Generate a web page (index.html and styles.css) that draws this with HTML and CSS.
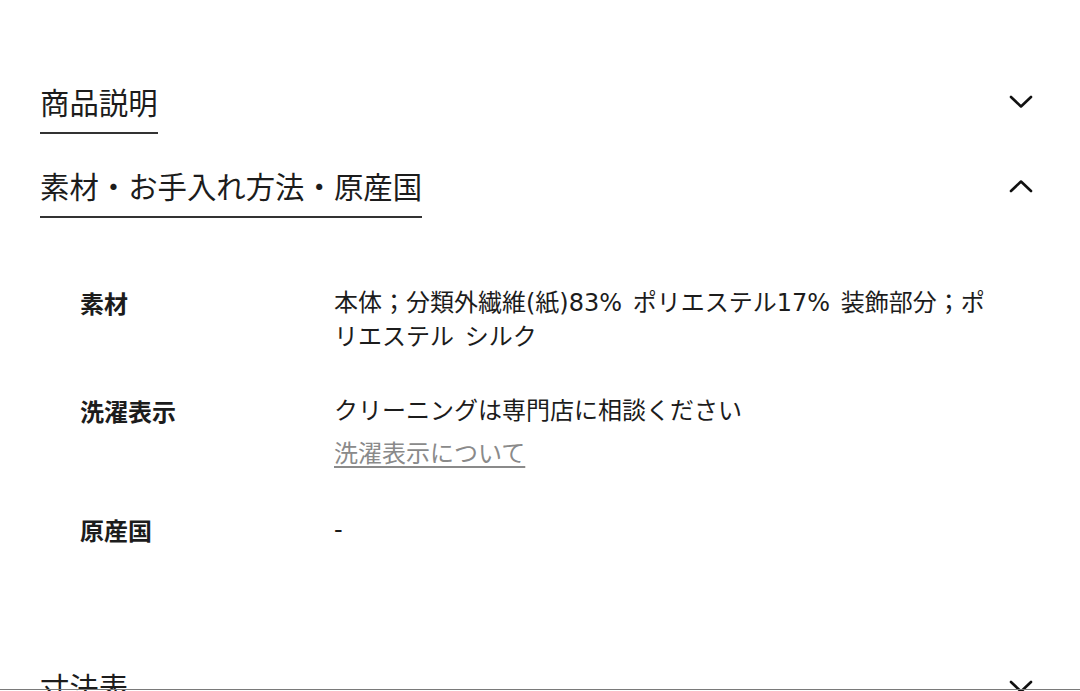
FILE: index.html
```html
<!DOCTYPE html>
<html lang="ja">
<head>
<meta charset="utf-8">
<link rel="stylesheet" href="styles.css">
</head>
<body>
<div class="page">
  <section class="acc">
    <div class="acc-head">
      <span class="acc-title">商品説明</span>
      <svg class="chev" viewBox="0 0 24 14" width="24" height="14"><path d="M2 2 L12 11.5 L22 2" /></svg>
    </div>
  </section>
  <section class="acc open">
    <div class="acc-head">
      <span class="acc-title">素材・お手入れ方法・原産国</span>
      <svg class="chev" viewBox="0 0 24 14" width="24" height="14"><path d="M2 12 L12 2.5 L22 12" /></svg>
    </div>
    <div class="acc-body">
      <div class="row">
        <div class="label">素材</div>
        <div class="value">本体；分類外繊維(紙)83% ポリエステル17% 装飾部分；ポリエステル シルク</div>
      </div>
      <div class="row">
        <div class="label">洗濯表示</div>
        <div class="value">クリーニングは専門店に相談ください<a class="link" href="#">洗濯表示について</a></div>
      </div>
      <div class="row">
        <div class="label">原産国</div>
        <div class="value">-</div>
      </div>
    </div>
  </section>
  <section class="acc">
    <div class="acc-head">
      <span class="acc-title">寸法表</span>
      <svg class="chev" viewBox="0 0 24 14" width="24" height="14"><path d="M2 2 L12 11.5 L22 2" /></svg>
    </div>
  </section>
</div>
<div class="bottom-edge"></div>
</body>
</html>
```

FILE: styles.css
```css
html, body {
  margin: 0;
  padding: 0;
  background: #fff;
  overflow: hidden;
}
body {
  font-family: "Noto Sans CJK JP", "Noto Sans", sans-serif;
  color: #1c1c1c;
}
.page {
  padding: 50px 40px 0 40px;
}
.acc-head {
  display: flex;
  align-items: center;
  justify-content: space-between;
  padding-top: 31px;
}
.acc-title {
  display: inline-block;
  font-size: 29.4px;
  line-height: 40px;
  padding-bottom: 11px;
  border-bottom: 2px solid #333;
}
.chev {
  fill: none;
  stroke: #111;
  stroke-width: 2.6;
  stroke-linecap: round;
  stroke-linejoin: round;
  margin-right: 7px;
  margin-bottom: 11px;
}
.acc-body {
  padding: 68px 40px 88px 40px;
  display: flex;
  flex-direction: column;
  gap: 40px;
}
.row {
  display: grid;
  grid-template-columns: 254px 666px;
  font-size: 24px;
  line-height: 34px;
}
.label {
  font-weight: 700;
}
.value {
  font-family: "DejaVu Sans", "Noto Sans CJK JP", sans-serif;
  word-spacing: 3px;
}
.value a.link {
  display: block;
  margin-top: 7px;
  margin-bottom: 4px;
  color: #8a8a8a;
  font-family: "Noto Sans CJK JP", sans-serif;
  text-decoration: underline;
  text-decoration-thickness: 1.5px;
  text-underline-offset: 4px;
}
.bottom-edge {
  position: fixed;
  left: 0;
  right: 0;
  bottom: 1px;
  height: 1.5px;
  background: #7a7a7a;
}
```
